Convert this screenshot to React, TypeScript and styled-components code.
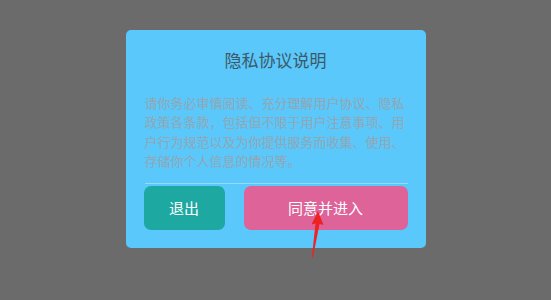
import React from "react";
import styled, { createGlobalStyle } from "styled-components";

const GlobalStyle = createGlobalStyle`
  html, body {
    margin: 0;
    padding: 0;
    background: #6b6b6b;
  }
  body {
    font-family: "Noto Sans CJK SC", "Noto Sans", sans-serif;
  }
`;

const Page = styled.div`
  position: relative;
  width: 551px;
  height: 300px;
  display: flex;
  justify-content: center;
  align-items: flex-start;
  padding-top: 30px;
  box-sizing: border-box;
  overflow: hidden;
`;

const Card = styled.div`
  width: 300px;
  box-sizing: border-box;
  background: #5ac8fb;
  border-radius: 5px;
  padding: 18px 18px 18px 18px;
  display: flex;
  flex-direction: column;
`;

const Title = styled.h2`
  margin: 0;
  font-size: 17px;
  line-height: 24px;
  font-weight: 400;
  color: #3d5868;
  text-align: center;
`;

const Body = styled.p`
  margin: 21px 0 0 1px;
  font-size: 13px;
  line-height: 19.4px;
  color: #93a6b2;
  word-break: break-all;
`;

const Divider = styled.div`
  height: 1px;
  margin: 12px 0 0 1px;
  background: rgba(255, 255, 255, 0.35);
`;

const Actions = styled.div`
  display: flex;
  gap: 19px;
  margin-top: 2px;
`;

const Button = styled.button<{ $tone: "exit" | "agree"; $grow?: boolean }>`
  height: 44px;
  border: none;
  border-radius: 7px;
  font-family: inherit;
  font-size: 15px;
  color: #ffffff;
  cursor: pointer;
  background: ${(p) => (p.$tone === "exit" ? "#1ea8a2" : "#dd6399")};
  width: ${(p) => (p.$grow ? "auto" : "81px")};
  flex: ${(p) => (p.$grow ? 1 : "none")};
`;

const Pointer = styled.svg`
  position: absolute;
  left: 0;
  top: 0;
  pointer-events: none;
`;

export default function App() {
  return (
    <>
      <GlobalStyle />
      <Page>
        <Card>
          <Title>隐私协议说明</Title>
          <Body>
            请你务必审慎阅读、充分理解用户协议、隐私政策各条款，包括但不限于用户注意事项、用户行为规范以及为你提供服务而收集、使用、存储你个人信息的情况等。
          </Body>
          <Divider />
          <Actions>
            <Button $tone="exit">退出</Button>
            <Button $tone="agree" $grow>
              同意并进入
            </Button>
          </Actions>
        </Card>
        <Pointer width="551" height="300" viewBox="0 0 551 300">
          <polygon
            points="318,211 323.5,225 319.5,224 312.8,258 311.8,258 315.5,223.5 311.5,224.5"
            fill="#ee2222"
          />
        </Pointer>
      </Page>
    </>
  );
}
